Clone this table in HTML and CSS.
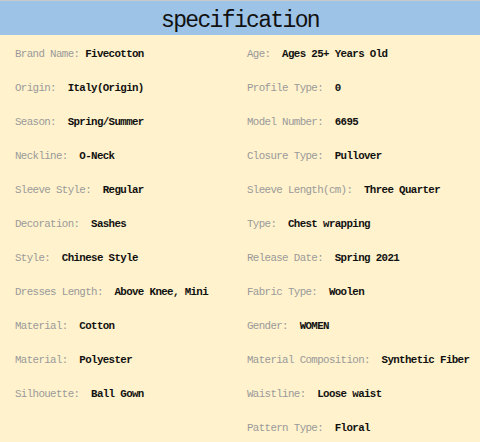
FILE: index.html
```html
<!DOCTYPE html>
<html>
<head>
<meta charset="utf-8">
<link rel="stylesheet" href="styles.css">
</head>
<body>
<div class="page">
  <div class="title">specification</div>
  <div class="specs">
    <div class="item"><span class="label">Brand Name: </span><span class="value">Fivecotton</span></div>
    <div class="item right"><span class="label">Age:  </span><span class="value">Ages 25+ Years Old</span></div>
    <div class="item"><span class="label">Origin:  </span><span class="value">Italy(Origin)</span></div>
    <div class="item right"><span class="label">Profile Type:  </span><span class="value">0</span></div>
    <div class="item"><span class="label">Season:  </span><span class="value">Spring/Summer</span></div>
    <div class="item right"><span class="label">Model Number:  </span><span class="value">6695</span></div>
    <div class="item"><span class="label">Neckline:  </span><span class="value">O-Neck</span></div>
    <div class="item right"><span class="label">Closure Type:  </span><span class="value">Pullover</span></div>
    <div class="item"><span class="label">Sleeve Style:  </span><span class="value">Regular</span></div>
    <div class="item right"><span class="label">Sleeve Length(cm):  </span><span class="value">Three Quarter</span></div>
    <div class="item"><span class="label">Decoration:  </span><span class="value">Sashes</span></div>
    <div class="item right"><span class="label">Type:  </span><span class="value">Chest wrapping</span></div>
    <div class="item"><span class="label">Style:  </span><span class="value">Chinese Style</span></div>
    <div class="item right"><span class="label">Release Date:  </span><span class="value">Spring 2021</span></div>
    <div class="item"><span class="label">Dresses Length:  </span><span class="value">Above Knee, Mini</span></div>
    <div class="item right"><span class="label">Fabric Type:  </span><span class="value">Woolen</span></div>
    <div class="item"><span class="label">Material:  </span><span class="value">Cotton</span></div>
    <div class="item right"><span class="label">Gender:  </span><span class="value">WOMEN</span></div>
    <div class="item"><span class="label">Material:  </span><span class="value">Polyester</span></div>
    <div class="item right"><span class="label">Material Composition:  </span><span class="value">Synthetic Fiber</span></div>
    <div class="item"><span class="label">Silhouette:  </span><span class="value">Ball Gown</span></div>
    <div class="item right"><span class="label">Waistline:  </span><span class="value">Loose waist</span></div>
    <div class="item"></div>
    <div class="item right"><span class="label">Pattern Type:  </span><span class="value">Floral</span></div>
  </div>
</div>
</body>
</html>
```

FILE: styles.css
```css
html, body {
  margin: 0;
  padding: 0;
  background: #fff2cc;
}
.page {
  width: 480px;
  height: 442px;
  overflow: hidden;
  background: #fff2cc;
}
.title {
  border-top: 1px solid #c8c8c8;
  background: #9dc3e6;
  font-family: "Liberation Mono", monospace;
  font-size: 23px;
  letter-spacing: -1.65px;
  color: #111;
  display: flex;
  align-items: center;
  justify-content: center;
  padding-top: 6px;
  box-sizing: border-box;
  height: 35px;
}
.specs {
  display: grid;
  grid-template-columns: 232px 1fr;
  grid-auto-rows: 34px;
  padding-left: 15px;
}
.item {
  display: flex;
  align-items: center;
  white-space: pre;
  font-family: "Liberation Mono", monospace;
  font-size: 10.8px;
  letter-spacing: -0.63px;
  padding-top: 3px;
}
.label {
  color: #9a9a9a;
}
.value {
  color: #111;
  font-weight: bold;
}
```
